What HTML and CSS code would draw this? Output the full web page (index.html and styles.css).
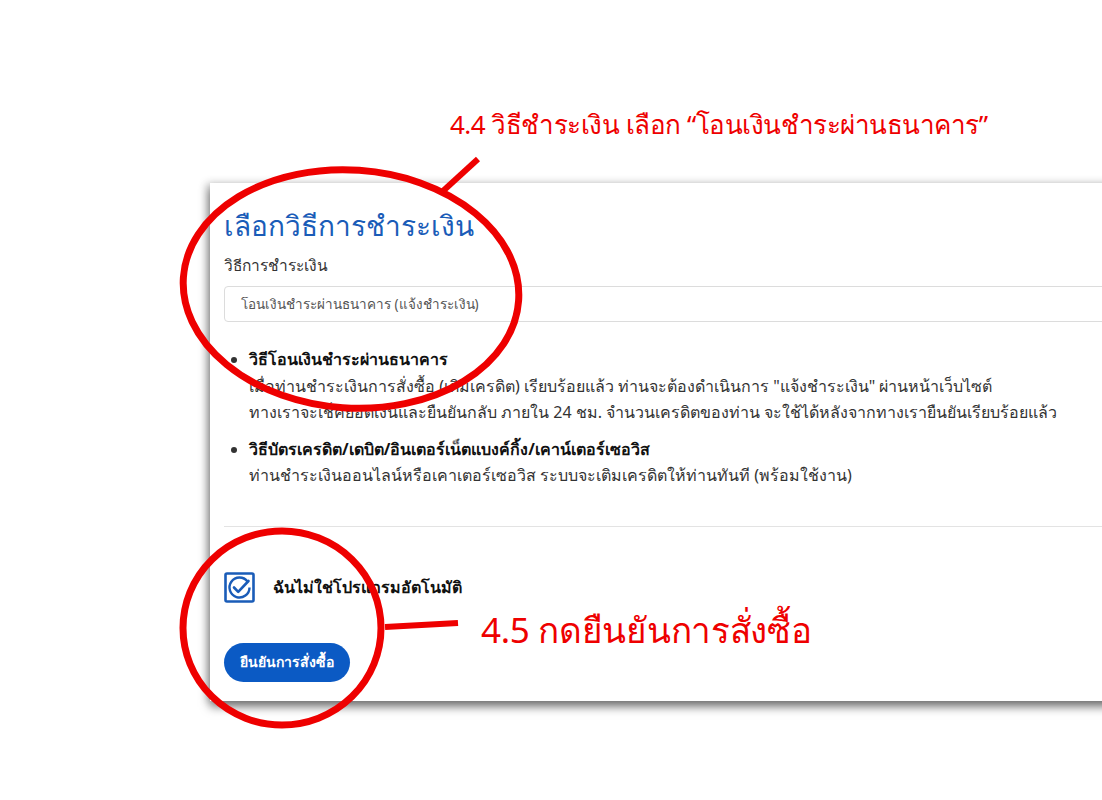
FILE: index.html
```html
<!DOCTYPE html>
<html lang="th">
<head>
  <meta charset="UTF-8">
  <meta name="viewport" content="width=device-width, initial-scale=1.0">
  <title>เลือกวิธีการชำระเงิน</title>
  <link rel="stylesheet" href="styles.css">
</head>
<body>
  <div class="page">
    <div class="card">
      <h1>เลือกวิธีการชำระเงิน</h1>
      <div class="form-group">
        <label for="payMethod">วิธีการชำระเงิน</label>
        <div class="select" id="payMethod">โอนเงินชำระผ่านธนาคาร (แจ้งชำระเงิน)</div>
      </div>

      <ul class="methods">
        <li>
          <strong>วิธีโอนเงินชำระผ่านธนาคาร</strong>
          <p>เมื่อท่านชำระเงินการสั่งซื้อ (เติมเครดิต) เรียบร้อยแล้ว ท่านจะต้องดำเนินการ "แจ้งชำระเงิน" ผ่านหน้าเว็บไซต์<br>ทางเราจะเช็คยอดเงินและยืนยันกลับ ภายใน 24 ชม. จำนวนเครดิตของท่าน จะใช้ได้หลังจากทางเรายืนยันเรียบร้อยแล้ว</p>
        </li>
        <li>
          <strong>วิธีบัตรเครดิต/เดบิต/อินเตอร์เน็ตแบงค์กิ้ง/เคาน์เตอร์เซอวิส</strong>
          <p>ท่านชำระเงินออนไลน์หรือเคาเตอร์เซอวิส ระบบจะเติมเครดิตให้ท่านทันที (พร้อมใช้งาน)</p>
        </li>
      </ul>

      <hr>

      <div class="captcha">
        <svg class="check-icon" width="31" height="31" viewBox="0 0 31 31" fill="none" stroke="#1a5cb8">
          <rect x="1.5" y="1.5" width="28" height="28" rx="1.5" stroke-width="2.6"/>
          <path d="M23.5 9.5 A10 10 0 1 0 25.5 15.5" stroke-width="2.4"/>
          <path d="M10 15.5 L14.2 19.8 L24.5 9" stroke-width="2.6" stroke-linecap="round" stroke-linejoin="round"/>
        </svg>
        <span>ฉันไม่ใช่โปรแกรมอัตโนมัติ</span>
      </div>

      <button type="button" class="confirm">ยืนยันการสั่งซื้อ</button>
    </div>

    <!-- tutorial marks drawn over the screenshot -->
    <div class="note note-top">4.4 วิธีชำระเงิน เลือก “โอนเงินชำระผ่านธนาคาร”</div>
    <div class="note note-bottom">4.5 กดยืนยันการสั่งซื้อ</div>
    <svg class="marks" width="1102" height="800" viewBox="0 0 1102 800" fill="none" stroke="#ee0000">
      <line x1="443" y1="191" x2="478" y2="159" stroke-width="6"/>
      <ellipse cx="351" cy="289" rx="168" ry="119" transform="rotate(4 351 289)" stroke-width="7"/>
      <ellipse cx="282" cy="628" rx="99" ry="97" stroke-width="7"/>
      <line x1="385" y1="627" x2="458" y2="623" stroke-width="6"/>
    </svg>
  </div>
</body>
</html>
```

FILE: styles.css
```css
body {
  margin: 0;
  padding: 0;
  background: #fff;
  font-family: "Noto Sans", sans-serif;
  color: #222;
  overflow: hidden;
}

.page {
  position: relative;
  width: 1102px;
  height: 800px;
  padding-top: 183px;
  box-sizing: border-box;
}

.card {
  margin-left: 210px;
  margin-right: -40px;
  padding: 20px 14px 19px;
  background: #fff;
  box-shadow: 0 6px 9px rgba(0, 0, 0, 0.5), -4px 0 8px rgba(0, 0, 0, 0.2);
}

h1 {
  margin: 0;
  font-size: 28px;
  font-weight: 400;
  line-height: 44px;
  color: #1a5cb8;
}

.form-group label {
  display: block;
  margin-top: 5px;
  font-size: 15.5px;
  line-height: 26px;
  color: #333;
}

.select {
  margin-top: 8px;
  height: 36px;
  padding: 0 16px;
  border: 1px solid #dcdcdc;
  border-radius: 4px;
  font-size: 13.5px;
  line-height: 34px;
  color: #555;
  box-sizing: border-box;
}

.methods {
  margin: 24px 0 0;
  padding-left: 25px;
  font-size: 16px;
  line-height: 26.5px;
  color: #333;
}

.methods li {
  margin-bottom: 10px;
}

.methods strong {
  color: #111;
}

.methods p {
  margin: 0;
}

hr {
  margin: 37px 0 0;
  border: 0;
  border-top: 1px solid #e3e3e3;
}

.captcha {
  display: flex;
  align-items: center;
  gap: 18px;
  margin-top: 45px;
  font-size: 16px;
  font-weight: 700;
  color: #111;
}

.check-icon {
  display: block;
}

.confirm {
  display: block;
  margin-top: 40px;
  height: 39px;
  padding: 0 16px;
  border: none;
  border-radius: 20px;
  background: #0b5ac4;
  color: #fff;
  font-family: inherit;
  font-size: 14px;
  font-weight: 700;
}

.note {
  position: absolute;
  color: #ee0000;
  font-family: "Noto Sans", sans-serif;
  white-space: nowrap;
}

.note-top {
  left: 450px;
  top: 104px;
  font-size: 26px;
  letter-spacing: -0.5px;
}

.note-bottom {
  left: 481px;
  top: 603px;
  font-size: 35px;
  letter-spacing: -0.3px;
}

.marks {
  position: absolute;
  left: 0;
  top: 0;
  pointer-events: none;
}
```
